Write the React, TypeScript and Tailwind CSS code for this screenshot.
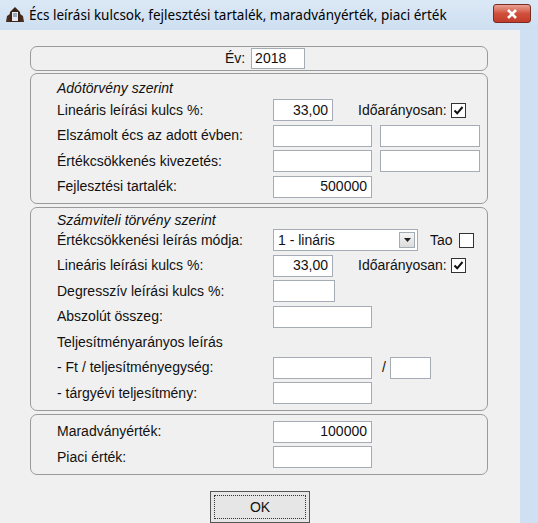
import React from "react";

const Box = ({ w, v = "", right = true }: { w: number; v?: string; right?: boolean }) => (
  <div
    className={`h-[22px] bg-white border border-[#a5acb5] px-[4px] flex items-center ${right ? "justify-end" : "justify-start"} text-[14px]`}
    style={{ width: w }}
  >
    {v}
  </div>
);

const Check = ({ on }: { on?: boolean }) => (
  <div className="w-[15px] h-[15px] bg-white border border-[#333] flex items-center justify-center">
    {on && (
      <svg width="11" height="11" viewBox="0 0 11 11">
        <path d="M1.5 5.5 L4.2 8.3 L9.5 2" stroke="#111" strokeWidth="2" fill="none" />
      </svg>
    )}
  </div>
);

const Row = ({ label, children }: { label: string; children?: React.ReactNode }) => (
  <div className="flex items-center h-[25.5px]">
    <div className="w-[216px] shrink-0">{label}</div>
    <div className="flex items-center">{children}</div>
  </div>
);

const Group = ({ children, cls }: { children: React.ReactNode; cls: string }) => (
  <div className={`mx-[30px] w-[458px] border border-[#9a9a9a] rounded-[7px] ${cls}`}>{children}</div>
);

export default function App() {
  return (
    <div
      className="w-[538px] h-[523px] bg-[#cfe0f2] flex flex-col text-[14px] text-[#111]"
      style={{ fontFamily: '"Liberation Sans", Arial, sans-serif' }}
    >
      <div className="h-[30px] flex items-center bg-gradient-to-b from-[#dbe8f6] to-[#cddff1] relative">
        <svg width="22" height="18" viewBox="0 0 22 18" className="ml-[4px]">
          <path d="M11 1 L6 6 L5 16 L17 16 L16 6 Z" fill="#3a2418" />
          <rect x="8" y="6" width="6" height="9" fill="#e8e8f4" />
          <path d="M3 10 L6 8 L6 16 L2 16 Z M19 10 L16 8 L16 16 L20 16 Z" fill="#4a2a1a" />
          <rect x="9" y="7" width="4" height="4" fill="#9ab" />
        </svg>
        <span className="ml-[3px] text-[13.5px] text-black" style={{ fontFamily: '"Noto Sans", "Open Sans", sans-serif' }}>
          Écs leírási kulcsok, fejlesztési tartalék, maradványérték, piaci érték
        </span>
        <div className="absolute left-[493px] top-[4px] w-[38px] h-[19px] rounded-[3px] border border-[#7a2b24] bg-gradient-to-b from-[#e8a194] via-[#d0503c] to-[#c23c2a] flex items-center justify-center">
          <svg width="12" height="10" viewBox="0 0 12 10">
            <path d="M2 1 L10 9 M10 1 L2 9" stroke="white" strokeWidth="2.6" />
          </svg>
        </div>
      </div>
      <div className="w-[520px] flex-1 bg-[#f0f0f0] flex flex-col pt-[16px]">
        <Group cls="h-[25px] flex items-center justify-center">
          <span className="mr-[6px] ml-[12px]">Év:</span>
          <div className="h-[21px] w-[54px] bg-white border border-[#a5acb5] px-[3px] flex items-center">2018</div>
        </Group>
        <Group cls="mt-[2px] pl-[26px] pt-[4px] pb-[3px]">
          <div className="italic h-[20px] leading-[20px]">Adótörvény szerint</div>
          <Row label="Lineáris leírási kulcs %:">
            <Box w={60} v="33,00" />
            <span className="ml-[25px] mr-[4px]">Időarányosan:</span>
            <Check on />
          </Row>
          <Row label="Elszámolt écs az adott évben:">
            <Box w={99} />
            <div className="w-[8px]" />
            <Box w={100} />
          </Row>
          <Row label="Értékcsökkenés kivezetés:">
            <Box w={99} />
            <div className="w-[8px]" />
            <Box w={100} />
          </Row>
          <Row label="Fejlesztési tartalék:">
            <Box w={99} v="500000" />
          </Row>
        </Group>
        <Group cls="mt-[3px] pl-[26px] pt-[4px] pb-[4px]">
          <div className="italic h-[16px] leading-[16px]">Számviteli törvény szerint</div>
          <Row label="Értékcsökkenési leírás módja:">
            <div className="h-[22px] w-[145px] bg-white border border-[#a5acb5] flex items-center justify-between pl-[4px] pr-[2px]">
              <span>1 - lináris</span>
              <div className="w-[16px] h-[16px] border border-[#a5acb5] bg-gradient-to-b from-[#f5f5f5] to-[#dcdcdc] flex items-center justify-center">
                <svg width="7" height="4" viewBox="0 0 7 4"><path d="M0 0 L7 0 L3.5 4 Z" fill="#222" /></svg>
              </div>
            </div>
            <span className="ml-[12px] mr-[6px]">Tao</span>
            <Check />
          </Row>
          <Row label="Lineáris leírási kulcs %:">
            <Box w={60} v="33,00" />
            <span className="ml-[25px] mr-[4px]">Időarányosan:</span>
            <Check on />
          </Row>
          <Row label="Degresszív leírási kulcs %:">
            <Box w={62} />
          </Row>
          <Row label="Abszolút összeg:">
            <Box w={99} />
          </Row>
          <Row label="Teljesítményarányos leírás" />
          <Row label="- Ft / teljesítményegység:">
            <Box w={99} />
            <span className="ml-[10px] mr-[4px]">/</span>
            <Box w={41} />
          </Row>
          <Row label="- tárgyévi teljesítmény:">
            <Box w={99} />
          </Row>
        </Group>
        <Group cls="mt-[3px] pl-[26px] pt-[4px] pb-[4px]">
          <Row label="Maradványérték:">
            <Box w={99} v="100000" />
          </Row>
          <Row label="Piaci érték:">
            <Box w={99} />
          </Row>
        </Group>
        <div className="mt-[16px] ml-[210px] w-[100px] h-[32px] border border-[#555] bg-[#e6e6e6] p-[3px]">
          <div className="w-full h-full border border-dotted border-[#333] flex items-center justify-center">OK</div>
        </div>
      </div>
    </div>
  );
}
